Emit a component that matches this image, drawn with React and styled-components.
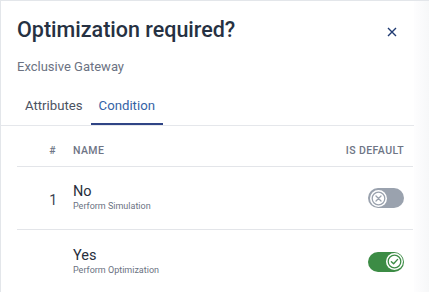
import React from 'react'
import styled, { createGlobalStyle } from 'styled-components'

const Global = createGlobalStyle`
  html, body {
    margin: 0;
    padding: 0;
    background: #ffffff;
  }
  body {
    font-family: Roboto, "Noto Sans", sans-serif;
  }
`

const Page = styled.div`
  width: 429px;
  height: 292px;
  overflow: hidden;
  background: linear-gradient(to right, #fdfdfe 0, #fdfdfe 414px, #f6f7f8 429px);
  border-top: 1px solid #e3e6ea;
  border-left: 1px solid #e3e6ea;
  box-sizing: border-box;
`

const Panel = styled.div`
  width: 413px;
  height: 100%;
  background: #fff;
  display: flex;
  flex-direction: column;
`

const Header = styled.div`
  display: flex;
  align-items: center;
  justify-content: space-between;
  padding: 14px 14px 0 16px;
`

const Title = styled.h1`
  margin: 0;
  font-size: 21.5px;
  font-weight: 500;
  color: #263142;
  line-height: 30px;
`

const Close = styled.button`
  border: 0;
  background: none;
  padding: 0;
  width: 16px;
  height: 16px;
  display: flex;
  align-items: center;
  justify-content: center;
  margin-top: 3px;
  cursor: pointer;
`

const Subtitle = styled.div`
  padding: 13px 16px 0;
  font-size: 13px;
  color: #6b7282;
  line-height: 18px;
`

const Tabs = styled.div`
  display: flex;
  margin-top: 15px;
  padding-left: 16px;
  border-bottom: 1px solid #e5e7eb;
`

const Tab = styled.div`
  padding: 6px 8px 8px;
  font-size: 13.2px;
  line-height: 18px;
  color: ${p => (p.$active ? '#3563a6' : '#4b5262')};
  border-bottom: 2px solid ${p => (p.$active ? '#2f4485' : 'transparent')};
`

const Table = styled.div`
  margin: 0 1px 0 16px;
`

const Row = styled.div`
  display: grid;
  grid-template-columns: 56px 1fr auto;
  align-items: center;
  padding-right: 9px;
  height: ${p => p.$h}px;
  border-bottom: ${p => (p.$last ? 'none' : '1px solid #e3e5e9')};
  box-sizing: border-box;
`

const HeadCell = styled.div`
  font-size: 10.5px;
  font-weight: 500;
  letter-spacing: 0.4px;
  color: #6e7585;
  text-transform: uppercase;
  padding-top: 8px;
  text-align: ${p => p.$align || 'left'};
  padding-right: ${p => (p.$num ? '17px' : '0')};
`

const Num = styled.div`
  text-align: right;
  padding-right: 16px;
  font-size: 14px;
  color: #3a4150;
  padding-top: 3px;
`

const Name = styled.div`
  display: flex;
  flex-direction: column;
`

const Label = styled.span`
  font-size: 14.5px;
  line-height: 17px;
  color: #272f3d;
`

const Hint = styled.span`
  font-size: 9px;
  line-height: 13px;
  color: #6b7282;
`

const Track = styled.div`
  width: 36px;
  height: 20px;
  border-radius: 10px;
  background: ${p => (p.$on ? '#3c8c45' : '#9aa2ae')};
  display: flex;
  align-items: center;
  justify-content: ${p => (p.$on ? 'flex-end' : 'flex-start')};
  padding: 0 1.5px;
  box-sizing: border-box;
`

const Knob = styled.div`
  width: 17px;
  height: 17px;
  border-radius: 50%;
  background: #fff;
  display: flex;
  align-items: center;
  justify-content: center;
`

function Toggle ({ on }) {
  const c = on ? '#3c8c45' : '#9aa2ae'
  return (
    <Track $on={on}>
      <Knob>
        <svg width='15' height='15' viewBox='0 0 15 15'>
          <circle cx='7.5' cy='7.5' r='6.3' fill='none' stroke={c} strokeWidth='1.3' />
          {on
            ? <path d='M4.4 7.7 L6.6 9.8 L10.6 5.4' fill='none' stroke={c} strokeWidth='1.4' strokeLinecap='round' strokeLinejoin='round' />
            : <path d='M5 5 L10 10 M10 5 L5 10' stroke={c} strokeWidth='1.3' strokeLinecap='round' />}
        </svg>
      </Knob>
    </Track>
  )
}

const rows = [
  { n: '1', name: 'No', hint: 'Perform Simulation', on: false },
  { n: '', name: 'Yes', hint: 'Perform Optimization', on: true }
]

export default function App () {
  return (
    <>
      <Global />
      <Page>
        <Panel>
          <Header>
            <Title>Optimization required?</Title>
            <Close aria-label='Close'>
              <svg width='10' height='10' viewBox='0 0 10 10'>
                <path d='M1 1 L9 9 M9 1 L1 9' stroke='#1f3a72' strokeWidth='1.4' />
              </svg>
            </Close>
          </Header>
          <Subtitle>Exclusive Gateway</Subtitle>
          <Tabs>
            <Tab>Attributes</Tab>
            <Tab $active>Condition</Tab>
          </Tabs>
          <Table>
            <Row $h={41}>
              <HeadCell $num $align='right'>#</HeadCell>
              <HeadCell>Name</HeadCell>
              <HeadCell $align='right'>Is default</HeadCell>
            </Row>
            {rows.map((r, i) => (
              <Row key={r.name} $h={63} $last={i === rows.length - 1}>
                <Num>{r.n}</Num>
                <Name>
                  <Label>{r.name}</Label>
                  <Hint>{r.hint}</Hint>
                </Name>
                <Toggle on={r.on} />
              </Row>
            ))}
          </Table>
        </Panel>
      </Page>
    </>
  )
}
